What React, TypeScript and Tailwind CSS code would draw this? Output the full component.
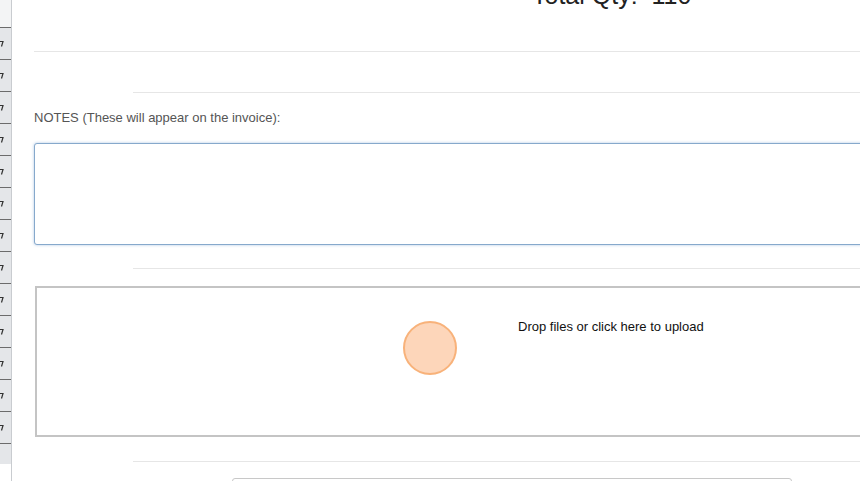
import React from 'react'

const rows = Array.from({ length: 13 })

function SideStrip() {
  return (
    <div className="w-[12px] shrink-0 overflow-hidden border-r border-[#c9ccd0] bg-white">
      <div className="h-[28px] border-b border-[#6b6b6b] bg-[#f3f4f5]" />
      {rows.map((_, i) => (
        <div key={i} className="flex h-[32px] items-center border-b border-[#6b6b6b] bg-[#e4e6e9]">
          <svg width="4" height="8" viewBox="0 0 4 8">
            <path d="M0 1.5 H3 L1.5 6.5" fill="none" stroke="#333" strokeWidth="1.2" />
          </svg>
        </div>
      ))}
      <div className="h-[20px] bg-[#e4e6e9]" />
    </div>
  )
}

export default function App() {
  return (
    <div
      className="flex h-[481px] w-[860px] overflow-hidden bg-white"
      style={{ fontFamily: '"Liberation Sans", Arial, sans-serif' }}
    >
      <SideStrip />
      <div className="relative w-[900px] shrink-0 pl-[22px]">
        {/* totals header */}
        <div className="-mt-[19px] h-[71px] border-b border-[#e6e6e6]">
          <p className="whitespace-pre pl-[498px] text-[25px] leading-[28px] text-[#222]">Total Qty:  110</p>
        </div>

        <div className="ml-[99px] mt-[40px] border-t border-[#e6e6e6]" />

        <label className="mt-[17px] block text-[13px] leading-[16px] text-[#555]">
          NOTES (These will appear on the invoice):
        </label>

        <textarea className="mt-[17px] block h-[102px] w-full resize-none rounded-[3px] border border-[#86a9cc] bg-white shadow-[0_0_3px_rgba(120,160,210,0.6)] outline-none" />

        <div className="ml-[99px] mt-[23px] border-t border-[#e6e6e6]" />

        <div className="ml-[1px] mt-[17px] flex h-[151px] border-2 border-[#c4c4c4] bg-white pl-[481px] pt-[31px]">
          <p className="text-[13px] leading-[16px] text-[#111]">Drop files or click here to upload</p>
        </div>

        <div className="ml-[99px] mt-[24px] border-t border-[#e6e6e6]" />

        <div className="mt-[16px] flex items-start">
          <span className="ml-[1px] w-[197px] text-[13px] leading-[16px] text-[#555]">Status</span>
          <div className="h-[30px] w-[560px] rounded-[3px] border border-[#c8c8c8]" />
        </div>

        {/* click indicator */}
        <div className="absolute left-[391px] top-[321px] h-[54px] w-[54px] rounded-full border-2 border-[#f8b27a] bg-[#fdd6ba]" />
      </div>
    </div>
  )
}
